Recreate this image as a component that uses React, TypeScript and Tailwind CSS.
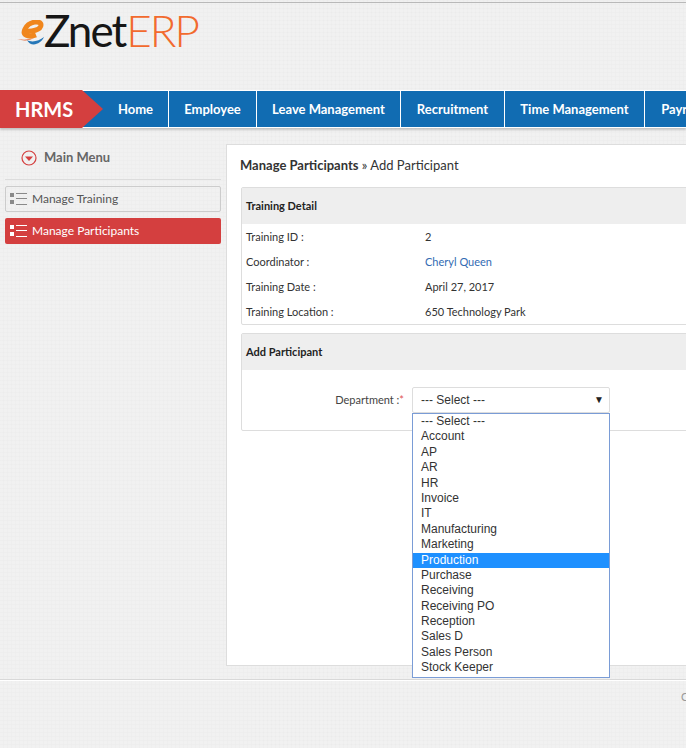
const navItems = [
  { label: "Home", width: "w-[66px]" },
  { label: "Employee", width: "w-[88px]" },
  { label: "Leave Management", width: "w-[144px]" },
  { label: "Recruitment", width: "w-[104px]" },
  { label: "Time Management", width: "w-[140px]" },
  { label: "Payroll", width: "w-[72px]" },
]

const departments = [
  "--- Select ---",
  "Account",
  "AP",
  "AR",
  "HR",
  "Invoice",
  "IT",
  "Manufacturing",
  "Marketing",
  "Production",
  "Purchase",
  "Receiving",
  "Receiving PO",
  "Reception",
  "Sales D",
  "Sales Person",
  "Stock Keeper",
]

const details = [
  { label: "Training ID :", value: "2" },
  { label: "Coordinator :", value: "Cheryl Queen", link: true },
  { label: "Training Date :", value: "April 27, 2017" },
  { label: "Training Location :", value: "650 Technology Park" },
]

const ListIcon = ({ light }: { light?: boolean }) => (
  <svg width="18" height="14" viewBox="0 0 18 14" className="shrink-0">
    <rect x="0" y="1" width="4" height="4" fill={light ? "#ffffff" : "#8a8a8a"} />
    <rect x="0" y="8" width="4" height="4" fill={light ? "#ffffff" : "#8a8a8a"} />
    <path d="M6 1.5h11M6 6.5h11M6 12.5h11" stroke={light ? "#ffffff" : "#8a8a8a"} strokeWidth="1" fill="none" />
  </svg>
)

const Logo = () => (
  <div className="flex items-end font-['Lato',sans-serif] text-[44px] leading-none tracking-[-2px]">
    <svg width="27" height="27" viewBox="0 0 27 27" className="mb-[5px] shrink-0">
      <path d="M8 11C14 12 24 10 24 5C24 0 12 1 8 9C5 15 11 18 19 15" fill="none" stroke="#f0861c" strokeWidth="5" />
      <path d="M0 19C6 20 11 20 17 18C12 21 6 21 0 19Z" fill="#e2581f" />
      <path d="M10 20C15 23 22 21 27 17C24 24 14 28 10 20Z" fill="#2577b8" />
    </svg>
    <span className="text-[#161616]">Znet</span>
    <span className="ml-[1px] font-light text-[#f26a2e]">ERP</span>
  </div>
)

export default function App() {
  return (
    <div className="h-[748px] w-[686px] overflow-hidden bg-[#f1f1f1] bg-[repeating-linear-gradient(0deg,transparent_0px,transparent_3px,rgba(0,0,0,0.012)_3px,rgba(0,0,0,0.012)_4px),repeating-linear-gradient(90deg,transparent_0px,transparent_3px,rgba(0,0,0,0.012)_3px,rgba(0,0,0,0.012)_4px)] font-['Lato',sans-serif] text-[12px] text-[#333333]">
      <div className="h-[90px] pt-[2px]">
        <div className="h-[88px] border-t border-[#b9b9b9] pl-[17px] pt-[5px]">
          <Logo />
        </div>
      </div>

      <div className="flex h-[38px] shadow-[0_2px_2px_rgba(0,0,0,0.18)]">
        <div className="relative z-10 flex w-[82px] shrink-0 items-center bg-[#d43f3f] pl-[15px] text-[20px] font-bold text-white">
          HRMS
          <div className="absolute left-[82px] top-0 h-0 w-0 border-y-[19px] border-l-[21px] border-y-transparent border-l-[#d43f3f]" />
        </div>
        <div className="flex flex-1 overflow-hidden border-y border-white bg-[#116cb2] pl-[21px]">
          {navItems.map((item, i) => (
            <div
              key={item.label}
              className={`flex shrink-0 items-center justify-center pt-[1px] text-[13px] font-bold text-white ${item.width} ${i < navItems.length - 1 ? "border-r border-white" : ""}`}
            >
              {item.label}
            </div>
          ))}
        </div>
      </div>

      <div className="flex h-[538px] pt-[16px]">
        <div className="w-[226px] shrink-0 px-[5px]">
          <div className="flex h-[36px] items-center gap-[7px] border-b border-[#dcdcdc] pb-[8px] pl-[16px]">
            <svg width="16" height="16" viewBox="0 0 16 16">
              <circle cx="8" cy="8" r="7" fill="none" stroke="#d43f3f" strokeWidth="1.2" />
              <path d="M4 6.5h8L8 11z" fill="#d43f3f" />
            </svg>
            <span className="text-[13px] font-bold text-[#666666]">Main Menu</span>
          </div>
          <div className="mt-[6px] flex h-[26px] items-center gap-[4px] rounded-[2px] border border-[#cccccc] pl-[4px] text-[#555555]">
            <ListIcon />
            Manage Training
          </div>
          <div className="mt-[6px] flex h-[26px] items-center gap-[4px] rounded-[2px] bg-[#d43f3f] pl-[5px] text-white">
            <ListIcon light />
            Manage Participants
          </div>
        </div>

        <div className="w-[480px] shrink-0 border border-[#dddddd] bg-white pl-[13px] pt-[12px]">
          <div className="text-[13px] leading-[17px] text-[#333333]">
            <span className="font-bold">Manage Participants</span> » Add Participant
          </div>

          <div className="ml-[1px] mt-[13px] rounded-[2px] border border-[#dddddd] text-[11px]">
            <div className="flex h-[36px] items-center bg-[#eeeeee] pl-[4px] font-bold text-[#222222]">
              Training Detail
            </div>
            {details.map((row) => (
              <div key={row.label} className="flex h-[25px] items-center pl-[4px] pt-[2px]">
                <span className="w-[179px] shrink-0">{row.label}</span>
                <span className={row.link ? "text-[#336bb3]" : ""}>{row.value}</span>
              </div>
            ))}
          </div>

          <div className="relative ml-[1px] mt-[8px] h-[98px] rounded-[2px] border border-[#dddddd] text-[11px]">
            <div className="flex h-[36px] items-center bg-[#eeeeee] pl-[4px] font-bold text-[#222222]">
              Add Participant
            </div>
            <div className="mt-[17px] flex items-center">
              <div className="w-[162px] text-right text-[#444444]">
                Department :<span className="text-[#e05555]">*</span>
              </div>
              <div className="ml-[8px] flex h-[26px] w-[198px] items-center justify-between rounded-[2px] border border-[#dddddd] bg-white pl-[8px] pr-[5px] font-['Liberation_Sans',sans-serif] text-[12px] text-[#333333]">
                --- Select ---
                <span className="text-[10px] leading-none text-[#222222]">▼</span>
              </div>
            </div>
            <div className="absolute left-[170px] top-[79px] z-10 w-[198px] border border-[#7a9cd6] bg-white pb-[1px] font-['Liberation_Sans',sans-serif] text-[12px] text-[#333333]">
              {departments.map((d) => (
                <div
                  key={d}
                  className={`h-[15.4px] pl-[8px] leading-[15px] ${d === "Production" ? "bg-[#1e90ff] text-white" : ""}`}
                >
                  {d}
                </div>
              ))}
            </div>
          </div>
        </div>
      </div>

      <div className="mt-[13px] border-t border-[#d8d8d8]">
        <div className="border-t border-white pl-[681px] pt-[8px] text-[11px] text-[#999999]">C</div>
      </div>
    </div>
  )
}
